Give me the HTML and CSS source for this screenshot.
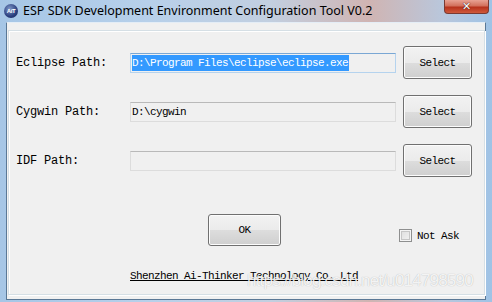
FILE: index.html
```html
<!DOCTYPE html>
<html>
<head>
<meta charset="utf-8">
<link rel="stylesheet" href="styles.css">
</head>
<body>
<div class="window">
  <div class="titlebar">
    <div class="appicon"><span class="appicon-text">AiT</span></div>
    <div class="title">ESP SDK Development Environment Configuration Tool V0.2</div>
    <div class="close"><span class="close-x">✕</span></div>
  </div>
  <div class="client">
    <div class="panel">
      <div class="rows">
        <div class="label">Eclipse Path:</div>
        <div class="field focused"><span class="sel">D:\Program Files\eclipse\eclipse.exe</span></div>
        <div class="btn">Select</div>

        <div class="label">Cygwin Path:</div>
        <div class="field">D:\cygwin</div>
        <div class="btn">Select</div>

        <div class="label">IDF Path:</div>
        <div class="field"></div>
        <div class="btn">Select</div>
      </div>
      <div class="actions">
        <div class="btn ok">OK</div>
        <label class="check"><span class="box"></span><span class="check-text">Not Ask</span></label>
      </div>
      <div class="footer">Shenzhen Ai-Thinker Technology Co. Ltd</div>
      <div class="watermark">https://blog.csdn.net/u014798590</div>
    </div>
  </div>
</div>
</body>
</html>
```

FILE: styles.css
```css
html, body {
  margin: 0;
  padding: 0;
}
body {
  width: 492px;
  height: 302px;
  overflow: hidden;
  background: #f0f0f0;
}
.window {
  width: 492px;
  height: 302px;
  box-sizing: border-box;
  display: flex;
  flex-direction: column;
  background: linear-gradient(90deg, #a6c6e6 0%, #b7d0ea 30%, #c2cfe0 55%, #d0b4b2 75%, #b9c7dc 90%, #9fc3e6 100%);
  padding: 0 6px 2px 6px;
}
.titlebar {
  height: 22px;
  display: flex;
  align-items: center;
  position: relative;
  margin: 0 -6px;
  padding: 0 6px;
}
.appicon {
  width: 14px;
  height: 14px;
  border-radius: 50%;
  background: radial-gradient(circle at 40% 35%, #7f98c8 0%, #2b3f7f 60%, #16224f 100%);
  display: flex;
  align-items: center;
  justify-content: center;
  margin-left: -2px;
}
.appicon-text {
  font-family: "Liberation Sans", sans-serif;
  font-size: 6px;
  font-weight: bold;
  color: #ffffff;
  letter-spacing: -0.4px;
}
.title {
  font-family: "Noto Sans", sans-serif;
  font-size: 12.5px;
  color: #000;
  margin-left: 5px;
  margin-top: -1px;
  white-space: nowrap;
}
.close {
  position: absolute;
  right: 3px;
  top: 0;
  width: 45px;
  height: 14px;
  box-sizing: border-box;
  border: 1px solid #7a3a32;
  border-top: none;
  border-radius: 0 0 4px 4px;
  background: linear-gradient(180deg, #e8a293 0%, #d2705c 45%, #b7321c 55%, #cf5a3c 100%);
  display: flex;
  align-items: center;
  justify-content: center;
}
.close-x {
  font-family: "DejaVu Sans", sans-serif;
  font-weight: bold;
  font-size: 11px;
  color: #fff;
  line-height: 1;
  text-shadow: 0 0 1px #4a1a12, 0 0 1px #4a1a12;
}
.client {
  flex: 1;
  background: #f0f0f0;
  border: 1px solid #5a7896;
  border-top-color: #e4edf6;
  padding: 7px 0 4px 1px;
  display: flex;
}
.panel {
  flex: 1;
  position: relative;
  border: 1px solid #d5dfe5;
  box-shadow: inset 1px 1px 0 #ffffff, 1px 1px 0 #ffffff;
  padding: 15px 0 0 7px;
}
.rows {
  display: grid;
  grid-template-columns: 107px 266px 69px;
  grid-auto-rows: 33px;
  column-gap: 7px;
  row-gap: 16px;
  align-items: center;
}
.label {
  font-family: "Liberation Mono", monospace;
  font-size: 12px;
  letter-spacing: -0.2px;
  color: #000;
}
.field {
  height: 20px;
  box-sizing: border-box;
  border: 1px solid #dcdcdc;
  border-top-color: #b9b9b9;
  background: #f0f0f0;
  font-family: "Liberation Mono", monospace;
  font-size: 11px;
  letter-spacing: -0.6px;
  color: #000;
  padding: 0 1px;
  display: flex;
  align-items: center;
  white-space: nowrap;
}
.field.focused {
  border-color: #b5d3ee;
  border-top-color: #7aa7d4;
}
.sel {
  background: #3399ff;
  color: #ffffff;
  line-height: 16px;
  padding-right: 1px;
}
.btn {
  height: 33px;
  box-sizing: border-box;
  border: 1px solid #707070;
  border-radius: 3px;
  box-shadow: inset 0 0 0 1px #fcfcfc;
  background: linear-gradient(180deg, #f2f2f2 0%, #ebebeb 50%, #dddddd 51%, #cfcfcf 100%);
  font-family: "Liberation Mono", monospace;
  font-size: 11px;
  letter-spacing: -0.6px;
  color: #000;
  display: flex;
  align-items: center;
  justify-content: center;
}
.actions {
  display: flex;
  align-items: center;
  margin-top: 37px;
  padding-left: 192px;
}
.ok {
  width: 73px;
  height: 32px;
}
.check {
  display: flex;
  align-items: center;
  margin-left: 118px;
  margin-top: 11px;
}
.box {
  width: 13px;
  height: 13px;
  box-sizing: border-box;
  border: 1px solid #8e8f8f;
  background: linear-gradient(135deg, #dcdcdc 0%, #f4f4f4 100%);
  box-shadow: inset 0 0 0 1px #f4f4f4, inset 0 0 0 2px #c6c6c6;
}
.check-text {
  font-family: "Liberation Mono", monospace;
  font-size: 11px;
  letter-spacing: -0.6px;
  margin-left: 5px;
  color: #000;
}
.footer {
  margin-top: 24px;
  margin-left: 114px;
  font-family: "Liberation Mono", monospace;
  font-size: 11px;
  letter-spacing: -0.6px;
  text-decoration: underline;
  color: #000;
}
.watermark {
  position: absolute;
  left: 238px;
  top: 240px;
  font-family: "Liberation Sans", sans-serif;
  font-size: 17px;
  letter-spacing: -0.8px;
  color: rgba(255, 255, 255, 0.85);
  text-shadow: 0 0 1px rgba(0, 0, 0, 0.28);
  white-space: nowrap;
}
```
